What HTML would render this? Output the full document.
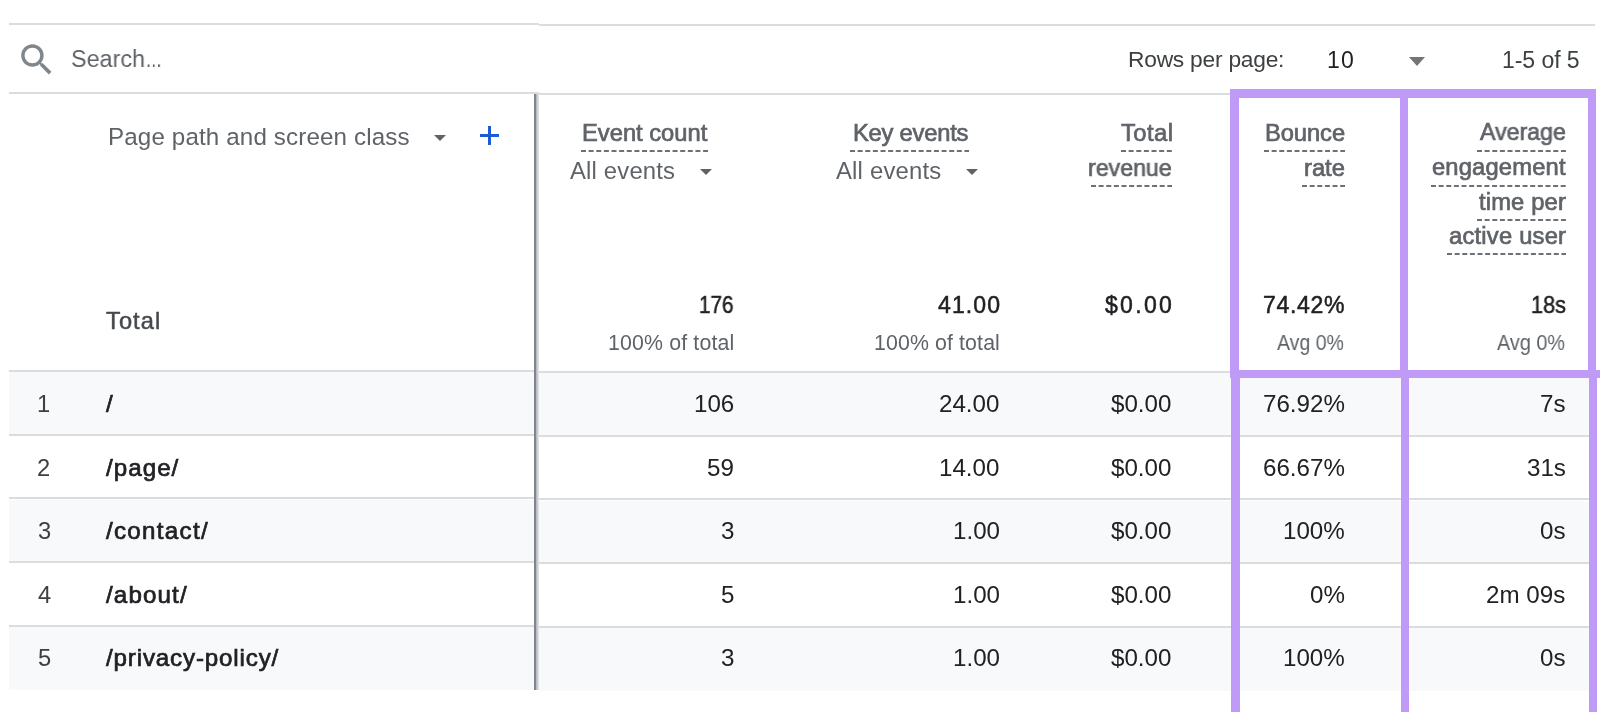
<!DOCTYPE html><html><head><meta charset="utf-8"><style>
html,body{margin:0;padding:0;background:#fff;}
body{width:1600px;height:712px;position:relative;overflow:hidden;font-family:"Liberation Sans",sans-serif;}
.t{position:absolute;white-space:nowrap;line-height:1;will-change:transform;}
.hl{position:absolute;height:2px;background:#dadce0;}
.dash{position:absolute;height:2px;background:repeating-linear-gradient(to left,#6d7176 0 5px,transparent 5px 7.63px);}
.row{position:absolute;background:#f8f9fa;}
.pv{position:absolute;background:#bf9af6;}
.tri{position:absolute;width:0;height:0;border-left:6px solid transparent;border-right:6px solid transparent;border-top:6px solid #5f6368;}
</style></head><body>
<div class="row" style="left:9px;width:530px;top:372px;height:62px"></div>
<div class="row" style="left:539px;width:1050px;top:373px;height:62px"></div>
<div class="row" style="left:9px;width:530px;top:500px;height:62px"></div>
<div class="row" style="left:539px;width:1050px;top:501px;height:62px"></div>
<div class="row" style="left:9px;width:530px;top:627px;height:63px"></div>
<div class="row" style="left:539px;width:1050px;top:628px;height:63px"></div>
<div class="hl" style="left:9px;width:530px;top:23px"></div>
<div class="hl" style="left:539px;width:1056px;top:24px"></div>
<div class="hl" style="left:9px;width:530px;top:92px"></div>
<div class="hl" style="left:539px;width:1056px;top:93px"></div>
<div class="hl" style="left:9px;width:530px;top:370px"></div>
<div class="hl" style="left:539px;width:1050px;top:371px"></div>
<div class="hl" style="left:9px;width:530px;top:434px"></div>
<div class="hl" style="left:539px;width:1050px;top:435px"></div>
<div class="hl" style="left:9px;width:530px;top:497px"></div>
<div class="hl" style="left:539px;width:1050px;top:498px"></div>
<div class="hl" style="left:9px;width:530px;top:561px"></div>
<div class="hl" style="left:539px;width:1050px;top:562px"></div>
<div class="hl" style="left:9px;width:530px;top:625px"></div>
<div class="hl" style="left:539px;width:1050px;top:626px"></div>
<div style="position:absolute;left:534px;top:94px;width:2px;height:596px;background:#80868b"></div>
<div style="position:absolute;left:536px;top:94px;width:3px;height:596px;background:linear-gradient(to right,#b0b4b8,#e8eaed)"></div>
<svg style="position:absolute;left:15.8px;top:38.8px" width="41.5" height="41.5" viewBox="0 0 24 24"><path fill="#80868b" d="M15.5 14h-.79l-.28-.27C15.41 12.59 16 11.11 16 9.5 16 5.91 13.09 3 9.5 3S3 5.910 3 9.5 5.91 16 9.5 16c1.61 0 3.09-.59 4.23-1.57l.27.28v.79l5 4.99L20.49 19l-4.99-5zm-6 0C7.01 14 5 11.990 5 9.5S7.01 5 9.5 5 14 7.01 14 9.5 11.99 14 9.5 14z"/></svg>
<div class="tri" style="left:434px;top:135px"></div>
<div class="tri" style="left:700px;top:169px"></div>
<div class="tri" style="left:966px;top:169px"></div>
<div class="tri" style="left:1409px;top:57px;border-left-width:8.5px;border-right-width:8.5px;border-top-width:9px;border-top-color:#757575"></div>
<div style="position:absolute;left:480px;top:134px;width:19px;height:3px;background:#1b5bd8"></div>
<div style="position:absolute;left:488px;top:126px;width:3px;height:19px;background:#1b5bd8"></div>
<svg style="position:absolute;left:580.92px;top:150px" width="127.08" height="2"><line x1="127.08" y1="1" x2="0" y2="1" stroke="#6d7176" stroke-width="2" stroke-dasharray="5 2.63"/></svg>
<svg style="position:absolute;left:849.55px;top:150px" width="119.45" height="2"><line x1="119.45" y1="1" x2="0" y2="1" stroke="#6d7176" stroke-width="2" stroke-dasharray="5 2.63"/></svg>
<svg style="position:absolute;left:1121.22px;top:150px" width="50.78" height="2"><line x1="50.78" y1="1" x2="0" y2="1" stroke="#6d7176" stroke-width="2" stroke-dasharray="5 2.63"/></svg>
<svg style="position:absolute;left:1090.70px;top:185px" width="81.30" height="2"><line x1="81.30" y1="1" x2="0" y2="1" stroke="#6d7176" stroke-width="2" stroke-dasharray="5 2.63"/></svg>
<svg style="position:absolute;left:1263.70px;top:150px" width="81.30" height="2"><line x1="81.30" y1="1" x2="0" y2="1" stroke="#6d7176" stroke-width="2" stroke-dasharray="5 2.63"/></svg>
<svg style="position:absolute;left:1301.85px;top:185px" width="43.15" height="2"><line x1="43.15" y1="1" x2="0" y2="1" stroke="#6d7176" stroke-width="2" stroke-dasharray="5 2.63"/></svg>
<svg style="position:absolute;left:1477.07px;top:150px" width="88.93" height="2"><line x1="88.93" y1="1" x2="0" y2="1" stroke="#6d7176" stroke-width="2" stroke-dasharray="5 2.63"/></svg>
<svg style="position:absolute;left:1431.29px;top:185px" width="134.71" height="2"><line x1="134.71" y1="1" x2="0" y2="1" stroke="#6d7176" stroke-width="2" stroke-dasharray="5 2.63"/></svg>
<svg style="position:absolute;left:1477.07px;top:219px" width="88.93" height="2"><line x1="88.93" y1="1" x2="0" y2="1" stroke="#6d7176" stroke-width="2" stroke-dasharray="5 2.63"/></svg>
<svg style="position:absolute;left:1446.55px;top:253px" width="119.45" height="2"><line x1="119.45" y1="1" x2="0" y2="1" stroke="#6d7176" stroke-width="2" stroke-dasharray="5 2.63"/></svg>
<div class="t" style="left:70.65px;top:47px;font-size:24.58px;color:#5f6368;transform:scaleX(0.9501);transform-origin:0 0;">Search</div>
<div class="t" style="left:146.39px;top:47px;font-size:24.58px;color:#5f6368;transform:scaleX(0.7564);transform-origin:0 0;">...</div>
<div class="t" style="left:107.75px;top:125px;font-size:24.16px;color:#5f6368;letter-spacing:0.14px;">Page path and screen class</div>
<div class="t" style="left:1128.00px;top:48px;font-size:22.77px;color:#3c4043;letter-spacing:-0.233px;">Rows per page:</div>
<div class="t" style="left:1326.50px;top:49px;font-size:23.04px;color:#202124;letter-spacing:1.091px;">10</div>
<div class="t" style="left:1502.40px;top:49px;font-size:23.04px;color:#3c4043;letter-spacing:-0.07px;">1-5 of 5</div>
<div class="t" style="left:582.15px;top:122px;font-size:23.74px;color:#5f6368;letter-spacing:-0.005px;-webkit-text-stroke:0.7px #5f6368;">Event count</div>
<div class="t" style="left:569.90px;top:159px;font-size:23.88px;color:#5f6368;letter-spacing:0.17px;">All events</div>
<div class="t" style="left:853.25px;top:122px;font-size:23.74px;color:#5f6368;letter-spacing:-0.217px;-webkit-text-stroke:0.7px #5f6368;">Key events</div>
<div class="t" style="left:835.80px;top:159px;font-size:23.88px;color:#5f6368;letter-spacing:0.192px;">All events</div>
<div class="t" style="left:1120.95px;top:122px;font-size:23.74px;color:#5f6368;letter-spacing:0.485px;-webkit-text-stroke:0.7px #5f6368;">Total</div>
<div class="t" style="left:1088.07px;top:157px;font-size:23.74px;color:#5f6368;-webkit-text-stroke:0.7px #5f6368;transform:scaleX(0.9769);transform-origin:0 0;">revenue</div>
<div class="t" style="left:1264.55px;top:122px;font-size:23.74px;color:#5f6368;letter-spacing:-0.08px;-webkit-text-stroke:0.7px #5f6368;">Bounce</div>
<div class="t" style="left:1303.75px;top:157px;font-size:23.74px;color:#5f6368;letter-spacing:0.001px;-webkit-text-stroke:0.7px #5f6368;">rate</div>
<div class="t" style="left:1479.94px;top:121px;font-size:23.74px;color:#5f6368;-webkit-text-stroke:0.7px #5f6368;transform:scaleX(0.9766);transform-origin:0 0;">Average</div>
<div class="t" style="left:1431.75px;top:156px;font-size:23.74px;color:#5f6368;letter-spacing:0.17px;-webkit-text-stroke:0.7px #5f6368;">engagement</div>
<div class="t" style="left:1478.75px;top:191px;font-size:23.74px;color:#5f6368;letter-spacing:0.153px;-webkit-text-stroke:0.7px #5f6368;">time per</div>
<div class="t" style="left:1448.55px;top:225px;font-size:23.74px;color:#5f6368;letter-spacing:0.224px;-webkit-text-stroke:0.7px #5f6368;">active user</div>
<div class="t" style="left:106.15px;top:310px;font-size:23.6px;color:#45494d;letter-spacing:1.101px;-webkit-text-stroke:0.5px #45494d;">Total</div>
<div class="t" style="left:699.23px;top:294px;font-size:23.04px;color:#202124;-webkit-text-stroke:0.5px #202124;transform:scaleX(0.8998);transform-origin:0 0;">176</div>
<div class="t" style="left:937.75px;top:294px;font-size:23.04px;color:#202124;letter-spacing:1.119px;-webkit-text-stroke:0.5px #202124;">41.00</div>
<div class="t" style="left:1104.95px;top:294px;font-size:23.04px;color:#202124;letter-spacing:2.306px;-webkit-text-stroke:0.5px #202124;">$0.00</div>
<div class="t" style="left:1262.65px;top:294px;font-size:23.04px;color:#202124;letter-spacing:0.653px;-webkit-text-stroke:0.5px #202124;">74.42%</div>
<div class="t" style="left:1530.69px;top:294px;font-size:23.04px;color:#202124;-webkit-text-stroke:0.5px #202124;transform:scaleX(0.9441);transform-origin:0 0;">18s</div>
<div class="t" style="left:608.10px;top:333px;font-size:21.3px;color:#5f6368;letter-spacing:0.159px;">100% of total</div>
<div class="t" style="left:874.20px;top:333px;font-size:21.3px;color:#5f6368;letter-spacing:0.126px;">100% of total</div>
<div class="t" style="left:1276.80px;top:333px;font-size:21.3px;color:#5f6368;transform:scaleX(0.9169);transform-origin:0 0;">Avg 0%</div>
<div class="t" style="left:1497.40px;top:333px;font-size:21.3px;color:#5f6368;transform:scaleX(0.9319);transform-origin:0 0;">Avg 0%</div>
<div class="t" style="left:36.60px;top:393px;font-size:23.74px;color:#3c4043;">1</div>
<div class="t" style="left:106.05px;top:392px;font-size:24.16px;color:#202124;-webkit-text-stroke:0.7px #202124;">/</div>
<div class="t" style="left:693.63px;top:392px;font-size:24.16px;color:#202124;">106</div>
<div class="t" style="left:939.28px;top:392px;font-size:24.16px;color:#202124;">24.00</div>
<div class="t" style="left:1111.48px;top:392px;font-size:24.16px;color:#202124;">$0.00</div>
<div class="t" style="left:1262.95px;top:392px;font-size:24.16px;color:#202124;">76.92%</div>
<div class="t" style="left:1540.07px;top:392px;font-size:24.16px;color:#202124;">7s</div>
<div class="t" style="left:36.60px;top:457px;font-size:23.74px;color:#3c4043;">2</div>
<div class="t" style="left:106.05px;top:456px;font-size:24.16px;color:#202124;letter-spacing:1.03px;-webkit-text-stroke:0.7px #202124;">/page/</div>
<div class="t" style="left:707.07px;top:456px;font-size:24.16px;color:#202124;">59</div>
<div class="t" style="left:939.28px;top:456px;font-size:24.16px;color:#202124;">14.00</div>
<div class="t" style="left:1111.48px;top:456px;font-size:24.16px;color:#202124;">$0.00</div>
<div class="t" style="left:1262.95px;top:456px;font-size:24.16px;color:#202124;">66.67%</div>
<div class="t" style="left:1526.63px;top:456px;font-size:24.16px;color:#202124;">31s</div>
<div class="t" style="left:37.60px;top:520px;font-size:23.74px;color:#3c4043;">3</div>
<div class="t" style="left:106.05px;top:519px;font-size:24.16px;color:#202124;letter-spacing:1.288px;-webkit-text-stroke:0.7px #202124;">/contact/</div>
<div class="t" style="left:720.50px;top:519px;font-size:24.16px;color:#202124;">3</div>
<div class="t" style="left:952.72px;top:519px;font-size:24.16px;color:#202124;">1.00</div>
<div class="t" style="left:1111.48px;top:519px;font-size:24.16px;color:#202124;">$0.00</div>
<div class="t" style="left:1283.10px;top:519px;font-size:24.16px;color:#202124;">100%</div>
<div class="t" style="left:1540.07px;top:519px;font-size:24.16px;color:#202124;">0s</div>
<div class="t" style="left:37.60px;top:584px;font-size:23.74px;color:#3c4043;">4</div>
<div class="t" style="left:106.05px;top:583px;font-size:24.16px;color:#202124;letter-spacing:1.123px;-webkit-text-stroke:0.7px #202124;">/about/</div>
<div class="t" style="left:720.50px;top:583px;font-size:24.16px;color:#202124;">5</div>
<div class="t" style="left:952.72px;top:583px;font-size:24.16px;color:#202124;">1.00</div>
<div class="t" style="left:1111.48px;top:583px;font-size:24.16px;color:#202124;">$0.00</div>
<div class="t" style="left:1309.97px;top:583px;font-size:24.16px;color:#202124;">0%</div>
<div class="t" style="left:1486.36px;top:583px;font-size:24.16px;color:#202124;">2m 09s</div>
<div class="t" style="left:37.60px;top:647px;font-size:23.74px;color:#3c4043;">5</div>
<div class="t" style="left:106.05px;top:646px;font-size:24.16px;color:#202124;letter-spacing:0.838px;-webkit-text-stroke:0.7px #202124;">/privacy-policy/</div>
<div class="t" style="left:720.50px;top:646px;font-size:24.16px;color:#202124;">3</div>
<div class="t" style="left:952.72px;top:646px;font-size:24.16px;color:#202124;">1.00</div>
<div class="t" style="left:1111.48px;top:646px;font-size:24.16px;color:#202124;">$0.00</div>
<div class="t" style="left:1283.10px;top:646px;font-size:24.16px;color:#202124;">100%</div>
<div class="t" style="left:1540.07px;top:646px;font-size:24.16px;color:#202124;">0s</div>
<div class="pv" style="left:1230px;top:89px;width:9px;height:281px"></div>
<div class="pv" style="left:1230px;top:89px;width:366px;height:9px"></div>
<div class="pv" style="left:1400px;top:89px;width:8px;height:281px"></div>
<div class="pv" style="left:1588px;top:89px;width:8px;height:281px"></div>
<div class="pv" style="left:1230px;top:370px;width:1367px;height:8px"></div>
<div class="pv" style="left:1231px;top:370px;width:9px;height:342px"></div>
<div class="pv" style="left:1401px;top:370px;width:8px;height:342px"></div>
<div class="pv" style="left:1589px;top:370px;width:8px;height:342px"></div>
</body></html>
